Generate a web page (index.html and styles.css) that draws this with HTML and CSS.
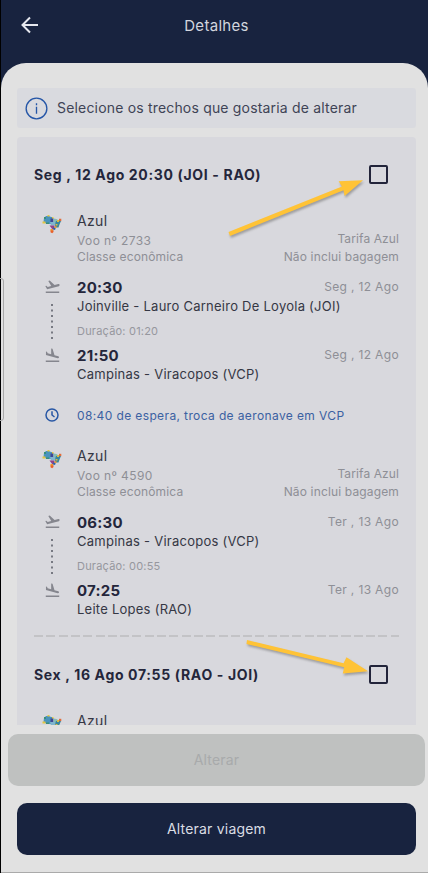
FILE: index.html
```html
<!DOCTYPE html>
<html lang="pt-BR">
<head>
<meta charset="utf-8">
<title>Detalhes</title>
<link rel="stylesheet" href="styles.css">
</head>
<body>
<svg class="defs" width="0" height="0" aria-hidden="true">
  <symbol id="brazil" viewBox="0 0 20 20">
    <path fill="#4a93bd" d="M2 4l2-2h3l2 1h2v5l-2 2H5L1.500 8z"/>
    <path fill="#e3c63f" d="M.5 7.500h3v2h-3zM5.500 1h2v1.500h-2zM10 3h1.500v2H10z"/>
    <path fill="#3a8f78" d="M2 3h2v2H2zM4 8.500h3V10H4z"/>
    <path fill="#3f4794" d="M8.500 4.500h3v3.500h-3z"/>
    <path fill="#86bdb5" d="M11.500 4.500l3 .5 1.500 1v3h-4.500z"/>
    <path fill="#7fb5cf" d="M8 8h5v3.500H9z"/>
    <path fill="#e46b38" d="M17 4.800h2.300v2.400H17z"/>
    <path fill="#39869d" d="M14 7h5l-1.500 3.500-1 3h-3.500V10z"/>
    <path fill="#d9bb45" d="M15 6h2v2h-2zM13.500 10h2v1.500h-2z"/>
    <path fill="#92418b" d="M7.500 11.500h5V14l-2 1.500z"/>
    <path fill="#2f5fa5" d="M11 13.500h2.500v1.800l-2 1.200z"/>
    <path fill="#ef9b30" d="M12.500 12.300h2v1.700h-2zM8.500 15h2.500v2H8.500z"/>
    <path fill="#e95f2b" d="M8.500 16.500h3V18l-1.300 1.300-1.700-1z"/>
  </symbol>
  <symbol id="takeoff" viewBox="0 0 24 24">
    <path d="M2.5 19h19v2h-19zM22.07 9.64c-.21-.8-1.04-1.28-1.84-1.06L14.92 10l-6.9-6.43-1.93.51 4.14 7.17-4.97 1.33-1.97-1.54-1.45.39 2.59 4.49L21 11.49c.81-.23 1.28-1.05 1.07-1.85z"/>
  </symbol>
  <symbol id="landing" viewBox="0 0 24 24">
    <path d="M2.5 19h19v2h-19zM19.34 15.85c.8.21 1.62-.26 1.84-1.06.21-.8-.26-1.62-1.06-1.84l-5.31-1.42-2.76-9.02L10.12 2v8.28L5.15 8.95l-.93-2.32-1.45-.39v5.17z"/>
  </symbol>
</svg>
<div class="screen">
  <header class="header">
    <svg class="back" viewBox="0 0 18 18"><path d="M17 9H2M9 1.5L1.5 9 9 16.5"/></svg>
    <h1 class="header-title">Detalhes</h1>
  </header>
  <main class="sheet">
    <div class="notice">
      <svg class="info" viewBox="0 0 24 24"><circle cx="12" cy="12" r="10.8"/><path d="M12 10.2v7.3M12 6.5v2"/></svg>
      <span>Selecione os trechos que gostaria de alterar</span>
    </div>
    <section class="card">
      <div class="leg-head"><h2 class="leg-title">Seg , 12 Ago 20:30 (JOI - RAO)</h2><span class="check"></span></div>
      <article class="flight">
        <div class="airline">
          <svg class="logo"><use href="#brazil"/></svg>
          <div><p class="name">Azul</p><p class="meta voo">Voo nº 2733</p><p class="meta">Classe econômica</p></div>
          <div class="fare"><p class="meta tarifa">Tarifa Azul</p><p class="meta bag">Não inclui bagagem</p></div>
        </div>
        <div class="route">
          <div class="track"><svg class="plane"><use href="#takeoff"/></svg><svg class="dots" viewBox="0 0 4 36"><path d="M2 1V36"/></svg><svg class="plane"><use href="#landing"/></svg></div>
          <div class="stops">
            <div class="when"><b class="time">20:30</b><span class="date">Seg , 12 Ago</span></div>
            <p class="place">Joinville - Lauro Carneiro De Loyola (JOI)</p>
            <p class="duration">Duração: 01:20</p>
            <div class="when"><b class="time">21:50</b><span class="date">Seg , 12 Ago</span></div>
            <p class="place">Campinas - Viracopos (VCP)</p>
          </div>
        </div>
      </article>
      <div class="wait">
        <svg class="clock" viewBox="0 0 14 14"><circle cx="7" cy="7" r="6"/><path d="M7 3.3V7l2.5 2"/></svg>
        <span>08:40 de espera, troca de aeronave em VCP</span>
      </div>
      <article class="flight">
        <div class="airline">
          <svg class="logo"><use href="#brazil"/></svg>
          <div><p class="name">Azul</p><p class="meta voo">Voo nº 4590</p><p class="meta">Classe econômica</p></div>
          <div class="fare"><p class="meta tarifa">Tarifa Azul</p><p class="meta bag">Não inclui bagagem</p></div>
        </div>
        <div class="route">
          <div class="track"><svg class="plane"><use href="#takeoff"/></svg><svg class="dots" viewBox="0 0 4 36"><path d="M2 1V36"/></svg><svg class="plane"><use href="#landing"/></svg></div>
          <div class="stops">
            <div class="when"><b class="time">06:30</b><span class="date">Ter , 13 Ago</span></div>
            <p class="place">Campinas - Viracopos (VCP)</p>
            <p class="duration">Duração: 00:55</p>
            <div class="when"><b class="time">07:25</b><span class="date">Ter , 13 Ago</span></div>
            <p class="place">Leite Lopes (RAO)</p>
          </div>
        </div>
      </article>
      <div class="divider"></div>
      <div class="leg-head"><h2 class="leg-title">Sex , 16 Ago 07:55 (RAO - JOI)</h2><span class="check"></span></div>
      <article class="flight">
        <div class="airline"><svg class="logo"><use href="#brazil"/></svg><div><p class="name">Azul</p></div></div>
      </article>
    </section>
    <footer class="actions">
      <button class="btn disabled" disabled>Alterar</button>
      <button class="btn primary">Alterar viagem</button>
    </footer>
  </main>
  <div class="edge-handle"></div>
  <svg class="arrows" viewBox="0 0 428 873">
    <path d="M228.500 232L342 186.500l-3.400-5.200 24.400-1-18.400 15.800-1.100-5.800L230 236z"/>
    <path d="M247 640L343.500 663.300l3-6 21.500 13.900-25.200 2.200 1.400-6.200L246.500 644z"/>
  </svg>
</div>
</body>
</html>
```
FILE: styles.css
```css
* { box-sizing: border-box; }
body { margin: 0; background: #000; font-family: Inter, "Open Sans", sans-serif; color: #353744; }
h1, h2, p { margin: 0; font-weight: 400; }
.defs { position: absolute; }
.screen { position: relative; width: 428px; height: 873px; padding-left: 1px; overflow: hidden; background: #000; }
.header { display: grid; grid-template-columns: 64px 1fr 60px; align-items: center; height: 88px; margin-bottom: -25px; padding: 0 0 38px; background: #18233f; }
.back { width: 18px; height: 18px; margin-left: 20px; fill: none; stroke: #e5e7ee; stroke-width: 2; }
.header-title { text-align: center; font-size: 15px; letter-spacing: .3px; color: #d3d6de; }
.sheet { display: flex; flex-direction: column; height: 810px; padding: 25px 12px 0 16px; border-radius: 25px 25px 0 0; background: #e1e1e1; border-bottom: 1px solid #aaa; }
.notice { display: flex; align-items: center; gap: 9px; flex: none; height: 40px; padding: 0 9px 2px 8px; border-radius: 3px; background: #d9dadf; font-size: 14px; letter-spacing: .18px; color: #3f4456; white-space: nowrap; }
.info { width: 23px; height: 23px; margin-top: 2px; fill: none; stroke: #2556a7; stroke-width: 1.4; }
.card { flex: none; height: 588px; margin-top: 9px; padding: 17px 17px 0; overflow: hidden; border-radius: 4px 4px 0 0; background: #d8d8dd; }
.leg-head { display: flex; justify-content: space-between; align-items: center; height: 40px; padding-right: 11px; }
.leg-title { font-size: 14px; font-weight: 650; letter-spacing: .66px; color: #24263b; white-space: nowrap; }
.check { width: 19px; height: 19px; border: 2px solid #22243a; border-radius: 2px; }
.flight { padding: 18px 0 0 6px; }
.airline { display: grid; grid-template-columns: 37px 1fr auto; }
.logo { width: 20px; height: 20px; margin: 2px 0 0 2px; }
.name { height: 21px; line-height: 18px; font-size: 14px; letter-spacing: .35px; }
.meta { height: 16px; line-height: 16px; font-size: 12px; letter-spacing: .15px; color: #8e8f96; }
.voo { letter-spacing: .4px; }
.tarifa { letter-spacing: .1px; }
.fare { padding-top: 19px; text-align: right; }
.fare .meta + .meta { margin-top: 2px; }
.route { display: grid; grid-template-columns: 37px 1fr; margin-top: 13px; }
.track { display: flex; flex-direction: column; align-items: center; width: 16px; margin-left: 4px; }
.plane { width: 17px; height: 17px; fill: #85868e; flex: none; }
.dots { width: 4px; height: 36px; margin: 8px 0; stroke: #777982; stroke-width: 2; stroke-dasharray: 2 3.5; }
.when { display: flex; justify-content: space-between; align-items: center; height: 19px; }
.time { font-size: 15px; font-weight: 650; letter-spacing: .25px; color: #24263b; }
.date { margin-top: -3px; font-size: 12px; letter-spacing: .35px; color: #8e8f96; }
.place { height: 18px; line-height: 18px; font-size: 13px; letter-spacing: .25px; white-space: nowrap; }
.duration { height: 16px; line-height: 16px; margin: 8px 0 7px; font-size: 11px; letter-spacing: .2px; color: #96979e; }
.wait { display: flex; align-items: center; gap: 18px; height: 20px; margin: 22px 0 4px 11px; font-size: 12px; letter-spacing: .38px; color: #3b61a2; white-space: nowrap; }
.clock { width: 14px; height: 14px; fill: none; stroke: #2857a5; stroke-width: 1.5; }
.divider { height: 1.5px; margin-top: 17px; margin-bottom: 17.5px; background: repeating-linear-gradient(90deg, #c3c3c6 0 9px, transparent 9px 12.300px); }
.actions { display: grid; gap: 17px; margin: 9px -9px 0; }
.btn { height: 52px; padding: 0 0 2px; border: 0; border-radius: 10px; font-family: inherit; font-size: 14px; letter-spacing: .2px; }
.disabled { background: #bfc1c0; color: #a8aaab; }
.primary { margin: 0 9px; background: #18233f; color: #dadde4; }
.edge-handle { position: absolute; left: -3px; top: 278px; width: 7px; height: 143px; border: 1px solid #aaa; border-radius: 3px; }
.arrows { position: absolute; inset: 0; width: 428px; height: 873px; fill: #ffc336; filter: drop-shadow(1px 2px 1px #7779); pointer-events: none; }
```
